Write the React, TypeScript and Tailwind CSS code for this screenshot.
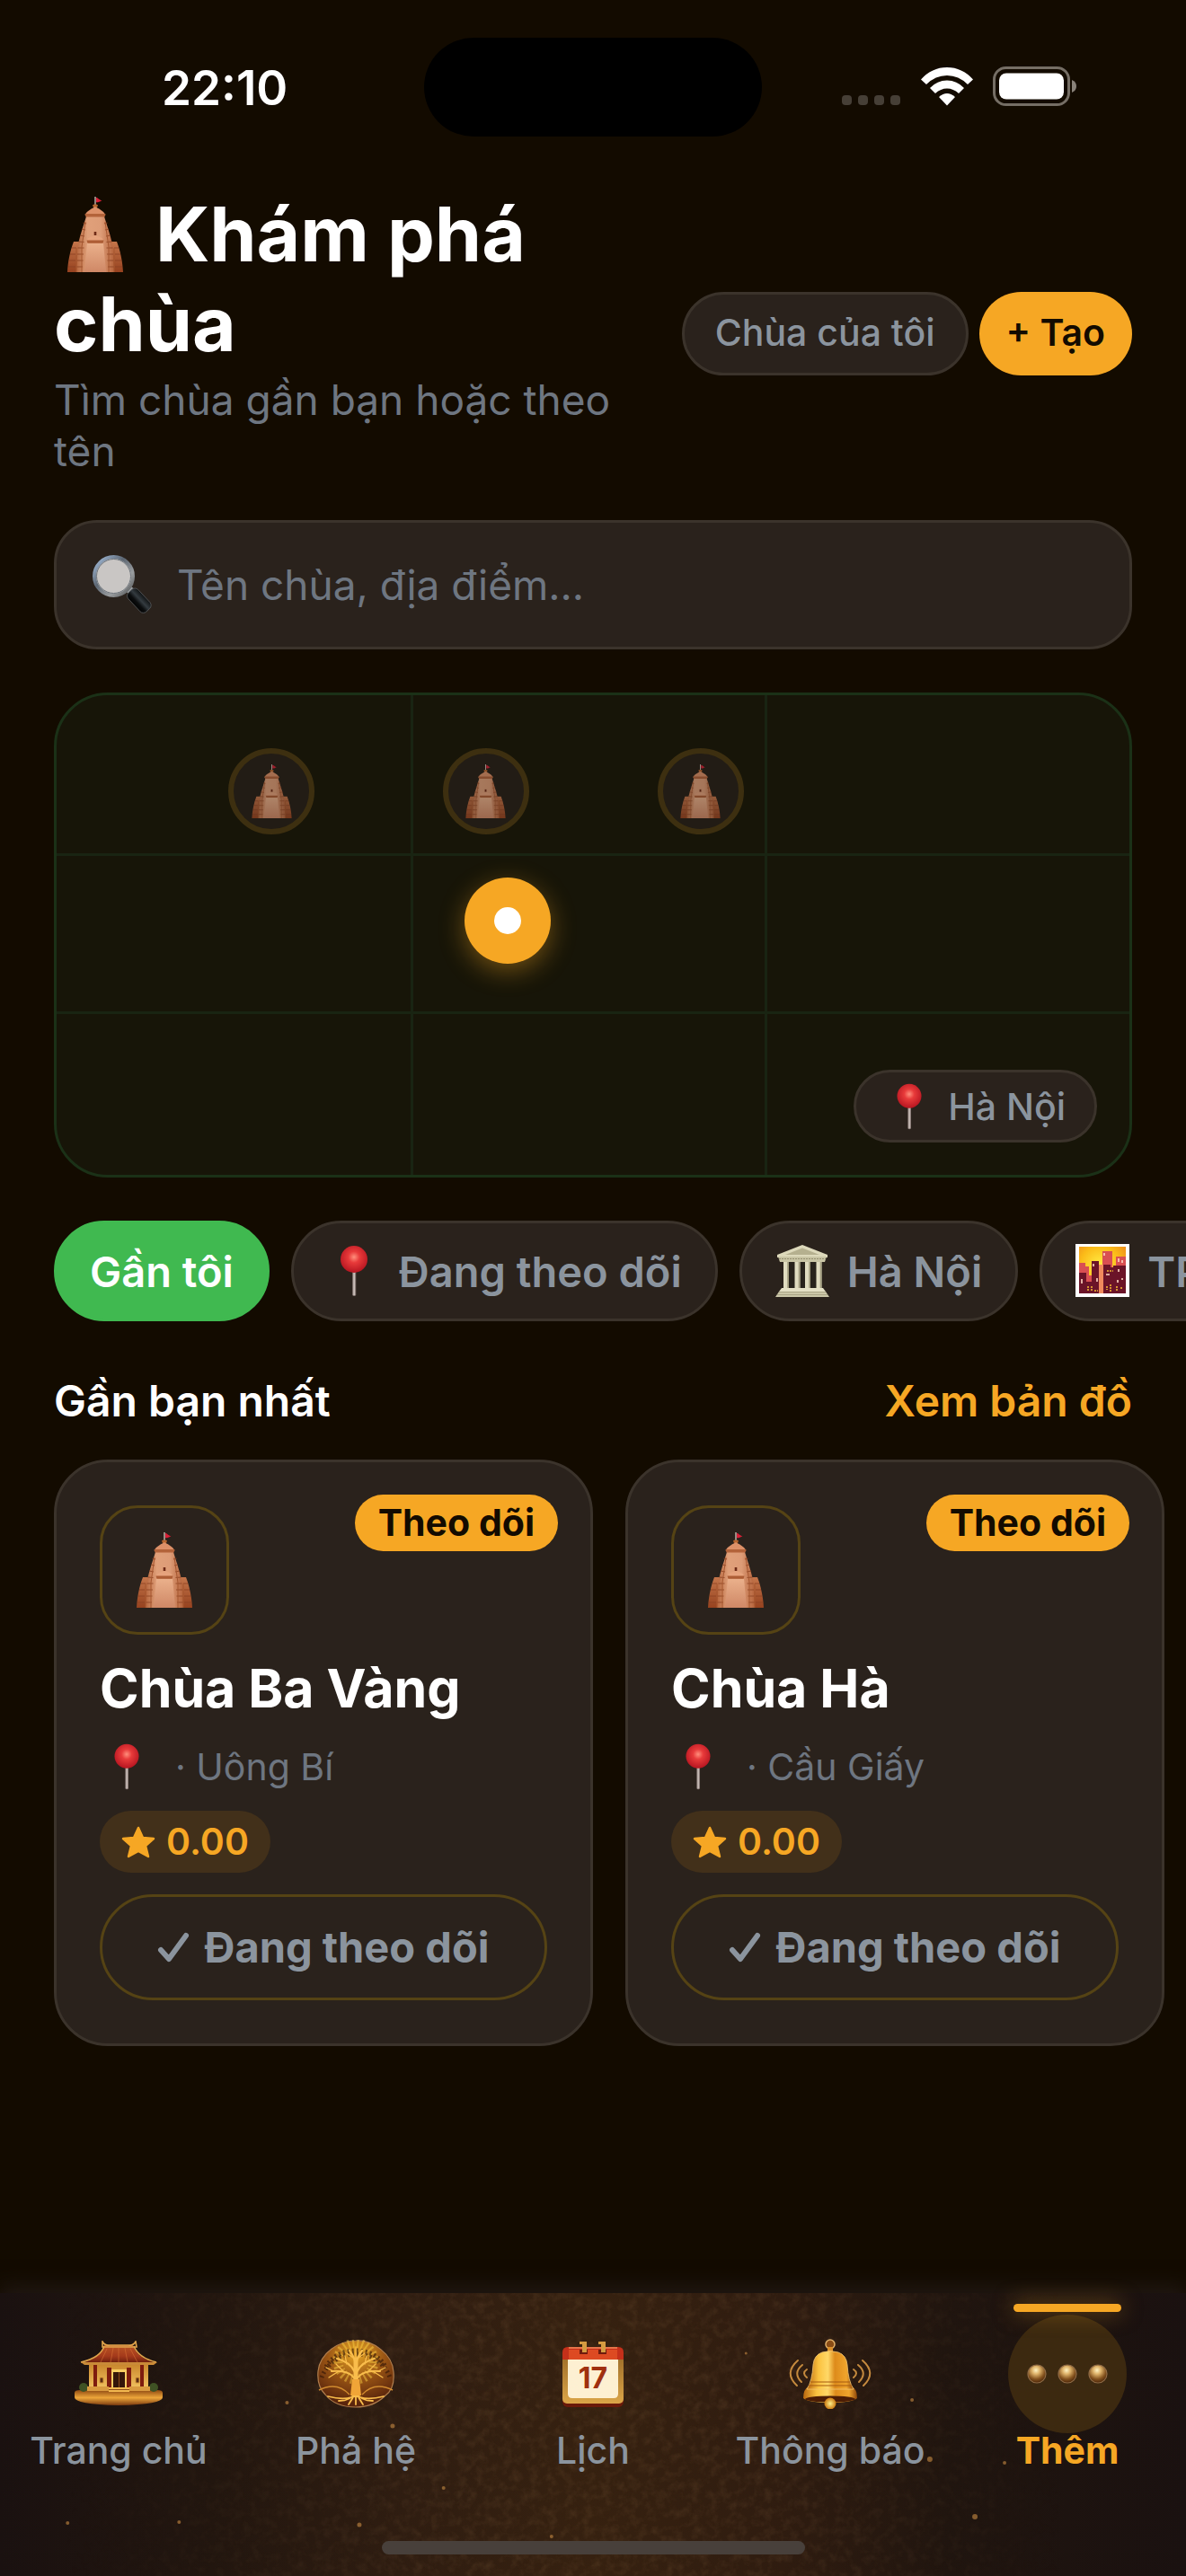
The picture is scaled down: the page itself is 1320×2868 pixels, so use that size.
import { useState } from "react";
import clsx from "clsx";

type IconProps = { className?: string };

const Temple = ({ className }: IconProps) => (
  <svg viewBox="0 0 62 84" className={className} aria-hidden="true">
    <defs>
      <linearGradient id="templeBody" x1="0" y1="0" x2="1" y2="0">
        <stop offset="0" stopColor="#b5653c" />
        <stop offset="0.3" stopColor="#e0a07a" />
        <stop offset="0.65" stopColor="#dd9c77" />
        <stop offset="1" stopColor="#b4623a" />
      </linearGradient>
      <linearGradient id="templeSide" x1="0" y1="0" x2="0" y2="1">
        <stop offset="0" stopColor="#c4754a" />
        <stop offset="1" stopColor="#96421f" />
      </linearGradient>
      <linearGradient id="templeFront" x1="0" y1="0" x2="0" y2="1">
        <stop offset="0" stopColor="#eab08b" />
        <stop offset="1" stopColor="#cf8866" />
      </linearGradient>
    </defs>
    <path d="M30.3 0h1.4v9h-1.4z" fill="#c9b8b0" />
    <path d="M32 1c2 0 2.500 2 6.500 3.500-2.500.5-2.500 2-6.500 1.800z" fill="#d81f36" />
    <path d="M28 9.500c0-1.500 6-1.500 6 0l-1.200 3h-3.600z" fill="#b5652f" />
    <path d="M31 11c2 1.500 9.500 4.500 11.500 9.500h-23C21.500 15.500 29 12.500 31 11z" fill="#dc9068" />
    <path d="M7 50h12v34H0c.5-11 3-24 7-34zM55 50H43v34h19c-.5-11-3-24-7-34z" fill="url(#templeSide)" />
    <path d="M21 22h20c4 13 8 24 9.500 34L52 84H10l1.500-28C13 46 17 35 21 22z" fill="url(#templeBody)" />
    <path d="M19.500 19h23l-1 3.500h-21z" fill="#b3633a" />
    <path
      d="M17.500 29l3.500 1M16 36l4 1M14 43l5 1M12.500 50l6 .5M11.500 57h7M11 64h7M10.500 71h7M10 78h7M44.500 29l-3.500 1M46 36l-4 1M48 43l-5 1M49.500 50l-6 .5M50.500 57h-7M51 64h-7M51.500 71h-7M52 78h-7M5 57h5M3 64h6M2 71h7M1 78h8M57 57h-5M59 64h-6M60 71h-7M61 78h-8"
      stroke="#8a4122"
      strokeWidth="1.100"
      opacity="0.8"
    />
    <path d="M20 28L16 56v28M42 28l4 28v28M10 57v27M52 57v27" stroke="#a5562f" strokeWidth="1" fill="none" />
    <path d="M22 52h18l3 32H19z" fill="url(#templeFront)" />
    <path d="M31 39v4" stroke="#6e2b17" strokeWidth="2.600" />
    <path d="M31 43c3 1 8 2 9 5.500H22c1-3.500 6-4.500 9-5.500z" fill="#e6a37d" />
    <path d="M21.500 48.500h19l-1 3.300h-17z" fill="#ad5d35" />
  </svg>
);

const Pin = ({ className }: IconProps) => (
  <svg viewBox="0 0 60 60" className={className} aria-hidden="true">
    <defs>
      <radialGradient id="pinHead" cx="0.500" cy="0.420" r="0.600">
        <stop offset="0" stopColor="#ff8f7c" />
        <stop offset="0.350" stopColor="#e83a3a" />
        <stop offset="1" stopColor="#b3131f" />
      </radialGradient>
    </defs>
    <path d="M28.200 28h4v29q-2 2-4 0z" fill="#8d7f7b" />
    <path d="M29.400 28h1.400v29h-1.400z" fill="#d8cdc8" />
    <circle cx="30" cy="17" r="15" fill="url(#pinHead)" />
  </svg>
);

const Magnifier = ({ className }: IconProps) => (
  <svg viewBox="0 0 66 66" className={className} aria-hidden="true">
    <defs>
      <linearGradient id="rim" x1="0" y1="0" x2="1" y2="1">
        <stop offset="0" stopColor="#a9c4e4" />
        <stop offset="0.4" stopColor="#5c6672" />
        <stop offset="0.7" stopColor="#9a9d9f" />
        <stop offset="1" stopColor="#4b4e50" />
      </linearGradient>
      <linearGradient id="grip" x1="0" y1="0" x2="0" y2="1">
        <stop offset="0" stopColor="#101314" />
        <stop offset="0.400" stopColor="#343b40" />
        <stop offset="0.700" stopColor="#0b0d0e" />
        <stop offset="1" stopColor="#020303" />
      </linearGradient>
    </defs>
    <path d="M38 41l5-6 5 4-6 6z" fill="#9b9fa2" />
    <rect x="37" y="43" width="29" height="15" rx="5" transform="rotate(47 51.500 51)" fill="url(#grip)" stroke="#55585a" strokeWidth="0.800" />
    <circle cx="23.500" cy="23.500" r="21.500" fill="#c9c6c4" stroke="url(#rim)" strokeWidth="4" />
    <circle cx="23.500" cy="23.500" r="19" fill="none" stroke="#6d747b" strokeWidth="1" />
  </svg>
);

const Museum = ({ className }: IconProps) => (
  <svg viewBox="0 0 60 60" className={className} aria-hidden="true">
    <path d="M10 20h42v30H10z" fill="#28231c" />
    <path d="M30 1L58 12v3H2v-3z" fill="#ddd9bb" />
    <path d="M30 4.500L49 12H11z" fill="#b5b08f" />
    <path d="M3 14h54l-2 6H5z" fill="#c9c5a5" />
    <path d="M4 16.500h52" stroke="#948f70" strokeWidth="1" strokeDasharray="2 1" />
    {[9, 21.5, 33, 45.5].map((x) => (
      <g key={x}>
        <path d={`M${x} 20h6v30h-6z`} fill="#e0dcc0" />
        <path d={`M${x + 4.200} 20h1.800v30h-1.800z`} fill="#a39e80" />
      </g>
    ))}
    <path d="M7 49h46l3 4H4z" fill="#e4e0c5" />
    <path d="M4 53h52l4 6H0z" fill="#cbc7a8" />
    <path d="M4 53.500h52M2 56.500h56" stroke="#a19c7e" strokeWidth="0.800" />
  </svg>
);

const City = ({ className }: IconProps) => (
  <svg viewBox="0 0 60 60" className={className} aria-hidden="true">
    <defs>
      <radialGradient id="dusk" cx="0.450" cy="0.400" r="0.700">
        <stop offset="0" stopColor="#ffee45" />
        <stop offset="0.600" stopColor="#fbbb18" />
        <stop offset="1" stopColor="#ee8a1c" />
      </radialGradient>
    </defs>
    <path d="M0 0h60v59H0z" fill="#fff" />
    <path d="M4 3h52v52H4z" fill="url(#dusk)" />
    <path d="M4 21h7v4h4v10h3V55H4zM30 8h11v47H30zM45 14h11v41H45z" fill="#d94f52" />
    <path d="M26 23h5v32h-5z" fill="#f08a5d" />
    <path d="M4 32h8v10h6V19h8v36H4zM31 23h8v3h3v-2h14v31H31z" fill="#6b1428" />
    <path
      d="M7 39v5M20 22v3M24 38v4M48 16v4M52 18v3M48 28v3M47 40v3M52 38v2M32 10v3M34 34h4"
      stroke="#ffd9c4"
      strokeWidth="1.600"
    />
    <path d="M14 47v6M18 47v6M21 52h4M35 30h7M35 47v4M39 45v8M46 47v6M51 48v3" stroke="#f2b632" strokeWidth="1.600" strokeDasharray="2 1" />
  </svg>
);

const HouseIcon = ({ className }: IconProps) => (
  <svg viewBox="0 0 98 74" className={className} aria-hidden="true">
    <defs>
      <linearGradient id="roof" x1="0" y1="0" x2="0" y2="1">
        <stop offset="0" stopColor="#b95524" />
        <stop offset="0.600" stopColor="#a53a1b" />
        <stop offset="1" stopColor="#6b1d0d" />
      </linearGradient>
      <linearGradient id="baseGold" x1="0" y1="0" x2="0" y2="1">
        <stop offset="0" stopColor="#8f4a12" />
        <stop offset="0.500" stopColor="#eda63a" />
        <stop offset="1" stopColor="#7a3a10" />
      </linearGradient>
      <linearGradient id="wall" x1="0" y1="0" x2="0" y2="1">
        <stop offset="0" stopColor="#c9862c" />
        <stop offset="1" stopColor="#f5c866" />
      </linearGradient>
    </defs>
    <path d="M0 58q0-3 6-3h86q6 0 6 3v5q0 8-49 9Q0 71 0 63z" fill="url(#baseGold)" />
    <ellipse cx="10" cy="52" rx="5" ry="5" fill="#3f5224" />
    <ellipse cx="88" cy="52" rx="5" ry="5" fill="#3f5224" />
    <path d="M16 26h66v30H16z" fill="url(#wall)" />
    <path d="M21 27h4v26h-4zM73 27h4v26h-4zM36 30h5v23h-5zM58 30h5v23h-5z" fill="#7e1c0e" />
    <path d="M41 32h17v20H41z" fill="#f8cd62" />
    <path d="M43 35h13v17H43z" fill="#35160a" />
    <path d="M49.500 35v17" stroke="#8a4a1a" strokeWidth="1" />
    <path d="M28 41h4v6h-4zM68 41h4v6h-4z" fill="#5c2c12" stroke="#d99738" strokeWidth="1" />
    <path d="M14 51h24v5H14zM61 51h23v5H61z" fill="#d99a3f" />
    <path d="M38 52h23v5H38z" fill="#f3b950" />
    <path d="M38 54.500h23" stroke="#8a4a1a" strokeWidth="1" />
    <path d="M33 5h32q5 15 26 20H8Q28 20 33 5z" fill="url(#roof)" />
    <path d="M36 9l-7 15M43 8l-3 16M49 8v16M56 8l3 16M62 9l8 15" stroke="#d97436" strokeWidth="0.800" opacity="0.700" />
    <path d="M31 1q3 5 8 4h21q5 1 8-4l1 6H31zM33 6Q29 19 7 24M66 6q5 13 25 18" fill="none" stroke="#e0a44c" strokeWidth="1.600" />
    <path d="M7 24h85l-4 3H11z" fill="#c98a38" />
  </svg>
);

const TreeIcon = ({ className }: IconProps) => (
  <svg viewBox="0 0 86 76" className={className} aria-hidden="true">
    <defs>
      <radialGradient id="canopy" cx="0.500" cy="0.200" r="0.750">
        <stop offset="0" stopColor="#e9a826" />
        <stop offset="0.500" stopColor="#9a5514" />
        <stop offset="1" stopColor="#5a250c" />
      </radialGradient>
    </defs>
    <path
      d="M43 1C62 0 84 16 85 36c1 12-2 21-9 26-9 9-20 13-33 13S17 71 9 61C3 55 0 46 1 35 3 15 24 1 43 1z"
      fill="url(#canopy)"
      stroke="#b07d4c"
      strokeWidth="1.200"
    />
    <circle cx="43" cy="24" r="20" fill="none" stroke="#ffd447" strokeWidth="11" strokeDasharray="2 3" opacity="0.450" />
    <path
      d="M10 30a36 30 0 0 1 66 0M5 42a40 38 0 0 1 76 0"
      fill="none"
      stroke="#2b1306"
      strokeWidth="5"
      strokeDasharray="2 3"
      opacity="0.600"
    />
    <path d="M2 56q20-10 34 5M84 56q-20-10-34 5" fill="none" stroke="#d08a2e" strokeWidth="1.500" />
    <g fill="none" stroke="#f9bd4c" strokeLinecap="round">
      <path d="M43 62V22" strokeWidth="5" />
      <path d="M43 46C39 36 28 34 16 35M43 46c4-10 15-12 27-11M42 36C38 27 30 23 22 21M44 36c4-9 12-13 20-15M43 28c-1-8-4-12-7-16M43 28c1-8 4-12 7-16" strokeWidth="2.200" />
      <path d="M30 36l-9-9M56 36l9-9M33 27l-2-9M53 27l2-9M24 35l-11 7M62 35l11 7M40 20l-7-5M46 20l7-5M43 22V8M18 35l-8-4M68 35l8-4" strokeWidth="1.300" />
      <path d="M42 59q-4 9-18 9M44 59q4 9 18 9M42 60q-3 6-7 12M44 60q3 6 7 12M43 60v12M38 64q-10 3-26-1M48 64q10 3 26-1" strokeWidth="1.800" />
    </g>
    <path d="M39 44h8l2 18H37z" fill="#f0a537" />
  </svg>
);

const CalendarIcon = ({ className }: IconProps) => (
  <svg viewBox="0 0 70 73" className={className} aria-hidden="true">
    <defs>
      <linearGradient id="frame" x1="0" y1="0" x2="0" y2="1">
        <stop offset="0" stopColor="#9a6a27" />
        <stop offset="1" stopColor="#dba548" />
      </linearGradient>
    </defs>
    <rect x="1" y="8" width="68" height="65" rx="6" fill="#6a1a0a" />
    <rect x="1" y="12" width="68" height="57" rx="5" fill="url(#frame)" />
    <path d="M1 20V12q0-6 6-6h56q6 0 6 6v8z" fill="#c5301a" />
    <path d="M8 20V9h54v11z" fill="#dd4a22" />
    <path d="M8 7h54" stroke="#f08a5a" strokeWidth="1.500" />
    <path d="M7 20h56v38q0 5-5 5H12q-5 0-5-5z" fill="#fdf0d2" />
    <path d="M20 9h9v5h-9zM41 9h9v5h-9z" fill="#6e1b0d" />
    <path d="M20 0h8v12h-5V3h-3zM41 0h8v12h-5V3h-3z" fill="#d59b41" />
    <text x="35" y="52" textAnchor="middle" fill="#a0300f" fontFamily="Inter, sans-serif" fontWeight="700" fontSize="32">
      17
    </text>
  </svg>
);

const BellIcon = ({ className }: IconProps) => (
  <svg viewBox="0 0 92 78" className={className} aria-hidden="true">
    <defs>
      <linearGradient id="bell" x1="0" y1="0" x2="1" y2="0">
        <stop offset="0" stopColor="#b9670f" />
        <stop offset="0.250" stopColor="#fbc23f" />
        <stop offset="0.450" stopColor="#ffd867" />
        <stop offset="0.600" stopColor="#dd8b1b" />
        <stop offset="0.850" stopColor="#f0a52c" />
        <stop offset="1" stopColor="#8c460b" />
      </linearGradient>
      <radialGradient id="clapper">
        <stop offset="0" stopColor="#fff08a" />
        <stop offset="1" stopColor="#c97810" />
      </radialGradient>
    </defs>
    <circle cx="46" cy="6" r="5" fill="#8a4d16" stroke="#e0b06a" strokeWidth="1.500" />
    <path d="M43 9h6v6h-6z" fill="#d98f2b" />
    <path d="M16 66q0-10 6-13h48q6 3 6 13-6 5-30 5T16 66z" fill="url(#bell)" />
    <ellipse cx="46" cy="67" rx="28" ry="3.500" fill="#4c1d05" />
    <path d="M37 15q9-3 18 0 9 3 10 14 1 18 7 27H20q6-9 7-27 1-11 10-14z" fill="url(#bell)" stroke="#f4c673" strokeWidth="0.800" />
    <path d="M24 48h44M22 52h48" stroke="#a65a10" strokeWidth="1.200" />
    <circle cx="46" cy="72" r="6.500" fill="url(#clapper)" />
    <g fill="none" stroke="#c58a3e" strokeWidth="2" strokeLinecap="round">
      <path d="M10 24Q-6 38 9 52M15 29Q4 38 14 48M20 34q-6 4 0 9" />
      <path d="M82 24q16 14 1 28M77 29q11 9 1 19M72 34q6 4 0 9" />
    </g>
  </svg>
);

const DotsIcon = ({ className }: IconProps) => (
  <svg viewBox="0 0 90 22" className={className} aria-hidden="true">
    <defs>
      <radialGradient id="bead" cx="0.450" cy="0.300" r="0.700">
        <stop offset="0" stopColor="#fff3c4" />
        <stop offset="0.300" stopColor="#e0b56c" />
        <stop offset="0.700" stopColor="#84531f" />
        <stop offset="1" stopColor="#4b2508" />
      </radialGradient>
    </defs>
    {[11, 45, 79].map((x) => (
      <circle key={x} cx={x} cy="11" r="10" fill="url(#bead)" stroke="#8f6a45" strokeWidth="1.200" />
    ))}
  </svg>
);

const StarIcon = ({ className }: IconProps) => (
  <svg viewBox="0 0 38 36" className={className} aria-hidden="true">
    <path
      d="M19 2l5 11 12 1-9 8 3 12-11-6-11 6 3-12-9-8 12-1z"
      fill="currentColor"
      stroke="currentColor"
      strokeWidth="2.500"
      strokeLinejoin="round"
    />
  </svg>
);

const CheckIcon = ({ className }: IconProps) => (
  <svg viewBox="0 0 36 34" className={className} aria-hidden="true">
    <path d="M4 20l9 10L32 4" fill="none" stroke="currentColor" strokeWidth="6" strokeLinecap="round" strokeLinejoin="round" />
  </svg>
);

const StatusBar = () => (
  <div className="grid grid-cols-3 items-start pt-[42px]">
    <div className="pl-[180px] pt-6 text-[53px] leading-[64px] font-semibold">22:10</div>
    <div className="mx-auto h-[110px] w-[376px] rounded-full bg-black" />
    <div className="flex items-center justify-end gap-[22px] pt-8 pr-[121px]">
      <svg viewBox="0 0 66 44" className="h-11 w-[66px]" aria-hidden="true">
        {[0, 18, 36, 54].map((x) => (
          <rect key={x} x={x} y="32" width="11" height="11" rx="4" fill="#463f36" />
        ))}
      </svg>
      <svg viewBox="0 0 58 44" className="h-11 w-[58px]" fill="#fff" aria-hidden="true">
        <path d="M0 14.500Q12 1 29 1t29 13.500l-6 5.500Q42 10 29 10T6 20z" />
        <path d="M10 24q8-8.500 19-8.500T48 24l-6 6q-6-5.500-13-5.500T16 30z" />
        <path d="M20 34q9-8 18 0l-9 9.500z" />
      </svg>
      <svg viewBox="0 0 94 44" className="h-11 w-[94px]" aria-hidden="true">
        <rect x="1.500" y="1.500" width="83" height="41" rx="13" fill="none" stroke="#756e65" strokeWidth="3" />
        <rect x="7" y="7.500" width="72" height="29" rx="8" fill="#fff" />
        <path d="M88 15q5 2 5 7t-5 7z" fill="#898279" />
      </svg>
    </div>
  </div>
);

const markers = ["left-[16%] top-[11%]", "left-[36%] top-[11%]", "left-[56%] top-[11%]"];

const MapPreview = () => (
  <section className="relative mt-12 h-[540px] overflow-hidden rounded-[60px] border-3 border-[#1b3117] bg-[#171508]">
    <div className="absolute inset-x-0 top-[33%] h-[3px] bg-[#192412]" />
    <div className="absolute inset-x-0 top-[66%] h-[3px] bg-[#192412]" />
    <div className="absolute inset-y-0 left-[33%] w-[3px] bg-[#192412]" />
    <div className="absolute inset-y-0 left-[66%] w-[3px] bg-[#192412]" />
    {markers.map((pos) => (
      <button
        key={pos}
        aria-label="Chùa"
        className={clsx(
          "absolute flex size-24 items-center justify-center rounded-full border-6 border-[#3d2f10] bg-[#221c15]",
          pos
        )}
      >
        <Temple className="h-[60px] w-[45px] opacity-70" />
      </button>
    ))}
    <div className="absolute top-[38%] left-[38%] flex size-24 items-center justify-center rounded-full bg-[#f6a724] shadow-[0_8px_28px_rgba(246,167,36,0.4)]">
      <div className="size-[30px] rounded-full bg-white" />
    </div>
    <div className="absolute right-9 bottom-9 flex h-[81px] items-center gap-4 rounded-full border-3 border-[#3b332b] bg-[#2a221c] px-8 text-[41px] leading-[50px] font-medium text-[#8b949e]">
      <Pin className="size-[54px]" />
      Hà Nội
    </div>
  </section>
);

const filters = [
  { label: "Gần tôi" },
  { label: "Đang theo dõi", icon: Pin },
  { label: "Hà Nội", icon: Museum },
  { label: "TP.HCM", icon: City },
];

const FilterBar = () => {
  const [active, setActive] = useState("Gần tôi");
  return (
    <div className="-mx-[60px] mt-12 flex gap-6 overflow-x-auto px-[60px] [scrollbar-width:none]">
      {filters.map(({ label, icon: Icon }) => (
        <button
          key={label}
          onClick={() => setActive(label)}
          className={clsx(
            "flex h-28 shrink-0 items-center gap-5 rounded-full border-3 px-[37px] text-[47px] leading-[57px] font-semibold",
            active === label
              ? "border-[#40b950] bg-[#40b950] text-white"
              : "border-[#3b332b] bg-[#2a221c] text-[#8b949e]"
          )}
        >
          {Icon && <Icon className="size-[60px]" />}
          {label}
        </button>
      ))}
    </div>
  );
};

const PagodaCard = ({ name, place, rating }: { name: string; place: string; rating: string }) => (
  <article className="relative w-[600px] shrink-0 rounded-[60px] border-3 border-[#3b332b] bg-[#2a221c] p-12">
    <span className="absolute top-9 right-9 rounded-full bg-[#f6a724] px-[26px] text-[41px] leading-[63px] font-bold text-[#130b00]">
      Theo dõi
    </span>
    <div className="flex size-36 items-center justify-center rounded-[42px] border-3 border-[#554314]">
      <Temple className="h-[84px] w-[62px]" />
    </div>
    <h3 className="mt-6 text-[59px] leading-[72px] font-bold">{name}</h3>
    <p className="mt-6 flex items-center gap-6 text-[41px] leading-[50px] text-[#6e7681]">
      <Pin className="h-[54px] w-[60px]" />
      <span>· {place}</span>
    </p>
    <div className="mt-[22px] flex h-[69px] w-fit items-center gap-3 rounded-full bg-[#42301a] px-6 text-[41px] font-semibold text-[#f6a724]">
      <StarIcon className="h-9 w-[38px]" />
      {rating}
    </div>
    <button className="mt-6 flex h-[118px] w-full items-center justify-center gap-4 rounded-full border-3 border-[#554314] text-[47px] font-bold text-[#8b949e]">
      <CheckIcon className="h-[34px] w-9" />
      Đang theo dõi
    </button>
  </article>
);

const tabs = [
  { label: "Trang chủ", icon: HouseIcon, size: "h-[74px] w-[98px]" },
  { label: "Phả hệ", icon: TreeIcon, size: "h-[76px] w-[86px]" },
  { label: "Lịch", icon: CalendarIcon, size: "h-[73px] w-[70px]" },
  { label: "Thông báo", icon: BellIcon, size: "h-[78px] w-[92px]" },
  { label: "Thêm", icon: DotsIcon, size: "h-[22px] w-[90px]", active: true },
];

const sparks = [
  ["5.7%", 256, 2],
  ["15.1%", 255, 2],
  ["24.2%", 122, 2],
  ["33.1%", 148, 2.5],
  ["30.3%", 258, 2.5],
  ["37.4%", 217, 2],
  ["46.5%", 271, 2],
  ["62.900%", 67, 1.5],
  ["78.400%", 185, 3],
  ["84.700%", 189, 2],
  ["82.200%", 249, 3],
  ["76.900%", 119, 2],
] as const;

const TabBar = () => (
  <nav className="relative bg-[linear-gradient(to_right,#1a1110_0%,#22160f_18%,#2f1d11_34%,#362110_50%,#2f1c10_66%,#20150f_80%,#1a1110_100%)] shadow-[0_-8px_20px_rgba(34,26,21,0.9)]">
    <svg className="absolute inset-0 h-full w-full" aria-hidden="true">
      <filter id="grain">
        <feTurbulence type="fractalNoise" baseFrequency="0.1" numOctaves="5" seed="8" />
        <feColorMatrix values="0 0 0 0 0.45  0 0 0 0 0.24  0 0 0 0 0.1  1.200 0 0 0 -0.480" />
      </filter>
      <linearGradient id="grainFade">
        <stop offset="0.050" stopColor="#000" />
        <stop offset="0.400" stopColor="#fff" />
        <stop offset="0.650" stopColor="#fff" />
        <stop offset="0.900" stopColor="#000" />
      </linearGradient>
      <mask id="grainMask">
        <rect width="100%" height="100%" fill="url(#grainFade)" />
      </mask>
      <g mask="url(#grainMask)">
        <rect width="100%" height="100%" filter="url(#grain)" opacity="0.220" />
      </g>
      {sparks.map(([cx, cy, r]) => (
        <circle key={cx} cx={cx} cy={cy} r={r} fill="#b07a3c" opacity="0.700" />
      ))}
    </svg>
    <div className="relative grid grid-cols-5 pt-6">
      {tabs.map(({ label, icon: Icon, size, active }) => (
        <a key={label} href="#" className="relative flex flex-col items-center">
          {active && (
            <span className="absolute -top-3 h-[9px] w-[120px] rounded-full bg-[#f6a724] shadow-[0_0_24px_rgba(246,167,36,0.5)]" />
          )}
          <span className={clsx("flex size-[132px] items-center justify-center rounded-full", active && "bg-[#3c2910]")}>
            <Icon className={size} />
          </span>
          <span
            className={clsx(
              "text-[41px] leading-[38px]",
              active ? "font-bold text-[#f6a724]" : "font-medium text-[#8b949e]"
            )}
          >
            {label}
          </span>
        </a>
      ))}
    </div>
    <div className="relative mx-auto mt-[82px] mb-6 h-[15px] w-[471px] rounded-full bg-[#48403b]" />
  </nav>
);

export default function App() {
  return (
    <div className="flex min-h-screen flex-col overflow-hidden bg-[#130b00] font-['Inter',sans-serif] text-white">
      <StatusBar />
      <main className="flex-1 px-[60px] pt-[59px]">
        <header className="flex items-center gap-3">
          <div className="flex-1">
            <h1 className="text-[84px] leading-[100px] font-bold">
              <Temple className="mr-4 ml-[15px] inline-block h-[84px] w-[62px] align-[-12px]" /> Khám phá chùa
            </h1>
            <p className="mt-[6px] text-[46px] leading-[57px] text-[#6e7681]">Tìm chùa gần bạn hoặc theo tên</p>
          </div>
          <button className="h-[93px] rounded-full border-3 border-[#3b332b] bg-[#2a221c] px-[34px] text-[41px] font-medium text-[#8b949e]">
            Chùa của tôi
          </button>
          <button className="h-[93px] rounded-full bg-[#f6a724] px-[30px] text-[41px] font-semibold text-[#130b00]">
            + Tạo
          </button>
        </header>

        <label className="mt-12 flex h-36 items-center gap-7 rounded-[48px] border-3 border-[#3b332b] bg-[#2a221c] px-10">
          <Magnifier className="size-[66px]" />
          <input
            type="search"
            aria-label="Tìm chùa"
            placeholder="Tên chùa, địa điểm..."
            className="min-w-0 flex-1 bg-transparent text-[46px] leading-[57px] outline-none placeholder:text-[#6e7681]"
          />
        </label>

        <MapPreview />
        <FilterBar />

        <div className="mt-[60px] flex items-center justify-between text-[48px] leading-[58px] font-semibold">
          <h2>Gần bạn nhất</h2>
          <a href="#" className="text-[#f6a724]">
            Xem bản đồ
          </a>
        </div>

        <div className="-mx-[60px] mt-9 flex gap-9 overflow-x-auto px-[60px] [scrollbar-width:none]">
          <PagodaCard name="Chùa Ba Vàng" place="Uông Bí" rating="0.00" />
          <PagodaCard name="Chùa Hà" place="Cầu Giấy" rating="0.00" />
        </div>
      </main>
      <TabBar />
    </div>
  );
}
